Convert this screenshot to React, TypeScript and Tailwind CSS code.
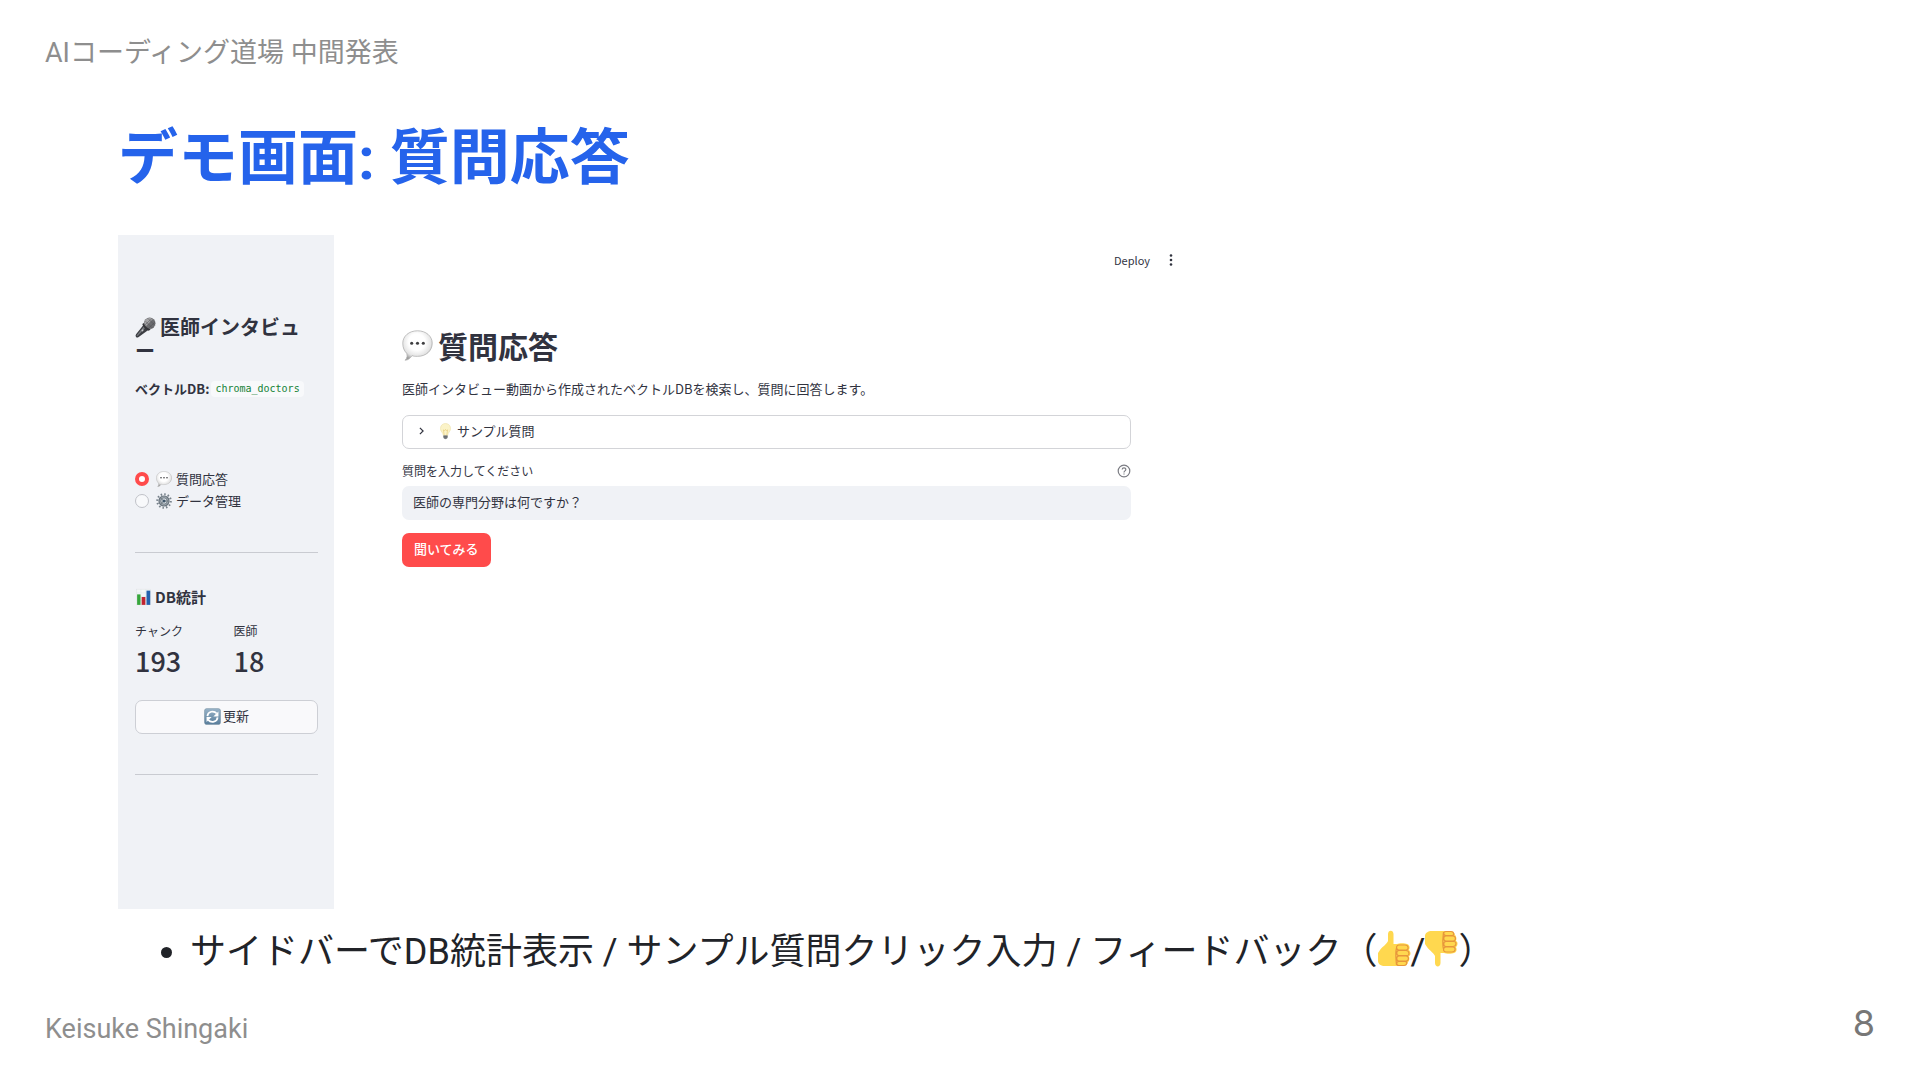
import { useState } from 'react';

type IconProps = { className?: string };

const pages = [
  { id: 'qa', label: '質問応答', Icon: SpeechBalloon },
  { id: 'data', label: 'データ管理', Icon: Gear },
];

const stats = [
  { label: 'チャンク', value: 193 },
  { label: '医師', value: 18 },
];

function Microphone({ className }: IconProps) {
  return (
    <svg viewBox="0 0 40 40" className={className} aria-hidden="true">
      <path d="M18 13 L28 23 L7 38 Q4 40 2 38 Q0 36 2 33 Z" fill="#3b3d42" />
      <path d="M19 15 L22 18 L5 36 L3 35 Z" fill="#74777c" />
      <circle cx="28" cy="12" r="11" fill="#6c6d70" />
      <path d="M20 5 Q27 -1 34 4 L21 17 Q15 12 20 5" fill="#a5a5a7" />
      <path d="M20 8 L33 21 M25 3 L38 16 M19 15 L32 3 M26 21 L38 10" stroke="#505154" strokeWidth="1" />
      <path d="M16 11 Q19 20 30 24 L26 26 Q17 23 14 14Z" fill="#333438" />
      <rect x="13" y="23" width="3" height="4" rx="1" transform="rotate(45 14 25)" fill="#c8c9cb" />
    </svg>
  );
}

function SpeechBalloon({ className }: IconProps) {
  return (
    <svg viewBox="0 0 40 40" className={className} aria-hidden="true">
      <defs>
        <radialGradient id="balloon" cx="48%" cy="38%" r="62%">
          <stop offset="45%" stopColor="#ffffff" />
          <stop offset="78%" stopColor="#e4e4e4" />
          <stop offset="100%" stopColor="#9c9c9c" />
        </radialGradient>
      </defs>
      <path
        d="M20 1 C31 1 39 8 39 17 C39 27 31 34 20 34 C17 34 15 34 13 33 C11 36 8 39 4 39 C7 36 7 33 6 30 C3 27 1 23 1 17 C1 8 9 1 20 1Z"
        fill="url(#balloon)"
        stroke="#b0b0b0"
        strokeWidth="1"
      />
      <g fill="#3e3e40">
        <circle cx="12.500" cy="17" r="2" />
        <circle cx="20" cy="17" r="2" />
        <circle cx="27.500" cy="17" r="2" />
      </g>
    </svg>
  );
}

function Gear({ className }: IconProps) {
  return (
    <svg viewBox="0 0 40 40" className={className} aria-hidden="true">
      <circle cx="20" cy="20" r="17" fill="none" stroke="#77828b" strokeWidth="5" strokeDasharray="3.8 5.1" />
      <circle cx="20" cy="20" r="12.500" fill="#a4adb5" stroke="#68737c" strokeWidth="3" />
      <circle cx="20" cy="20" r="8" fill="#dce2e7" stroke="#5c6871" strokeWidth="2" />
      <path d="M20 20 L12 13 M20 20 L12 27 M20 20 L30 20" stroke="#68737c" strokeWidth="2" />
      <circle cx="20" cy="20" r="4" fill="#3e5468" />
    </svg>
  );
}

function BarChart({ className }: IconProps) {
  return (
    <svg viewBox="0 0 40 44" className={className} aria-hidden="true">
      <rect x="1" y="1" width="38" height="42" fill="#f3f6f7" stroke="#d7dddf" />
      <path d="M1 11H39M1 21H39M1 31H39M13 1V43M26 1V43" stroke="#d5e1e6" />
      <rect x="3" y="15" width="9" height="28" fill="#36a63b" />
      <rect x="15" y="22" width="10" height="21" fill="#c02430" />
      <rect x="28" y="5" width="10" height="38" fill="#2361ae" />
    </svg>
  );
}

function Refresh({ className }: IconProps) {
  return (
    <svg viewBox="0 0 40 40" className={className} aria-hidden="true">
      <defs>
        <linearGradient id="refresh" x1="0" y1="0" x2="0" y2="1">
          <stop offset="0" stopColor="#98b3c8" />
          <stop offset="1" stopColor="#587d9b" />
        </linearGradient>
      </defs>
      <rect x="1" y="1" width="38" height="38" rx="6" fill="url(#refresh)" stroke="#6e8798" />
      <path d="M8 19 C9 8 23 5 30 13" fill="none" stroke="#fff" strokeWidth="4" />
      <path d="M34 8 V20 H22Z" fill="#fff" />
      <path d="M32 22 C31 33 17 36 10 28" fill="none" stroke="#fff" strokeWidth="4" />
      <path d="M6 33 V21 H18Z" fill="#fff" />
    </svg>
  );
}

function Bulb({ className }: IconProps) {
  return (
    <svg viewBox="0 0 26 40" className={className} aria-hidden="true">
      <path d="M13 1 C20 1 25 6 25 13 C25 20 19 22 18 30 H8 C7 22 1 20 1 13 C1 6 6 1 13 1Z" fill="#fbf3c8" stroke="#e6d993" />
      <path d="M10 29 L8 16 L11 18 L13 15 L15 18 L18 16 L16 29" fill="none" stroke="#e3c76c" strokeWidth="1.300" />
      <path d="M8 29 H18 V35 Q13 42 8 35Z" fill="#85898c" />
      <path d="M8 32H18M9 35H17" stroke="#4e5255" strokeWidth="1.200" />
    </svg>
  );
}

function ThumbsUp({ className }: IconProps) {
  return (
    <svg viewBox="0 0 33 37" className={className} aria-hidden="true">
      <path
        d="M2 20 C5 16 9 14 10 11 V4 C10 -.5 15.500 -.5 15.500 4 V14 H19 C21 13 27 13 29 14 C32 15 32 18 31 20 C33 22 33 25 31 26 C32 29 31 31 30 32 C29 36 26 36 23 36 H7 C3 36 0 34 0 31 V23 Z"
        fill="#ffd84f"
      />
      <path
        d="M18.500 18 C17 23 18 29 18.500 35 M29 20 H21 C18 20 17.500 15 21 15 H27 C31 15 31 20 28 20 M29 25.500 H21 C18 25.500 18 20.500 21 20.500 H28 C31.500 20.500 32 25.500 29 25.500 M28 31 H21 C18 31 18 26 21 26 H28 C31.500 26 31 31 28 31 M26 35.500 H21 C18 35.500 18 31.500 21 31.500 H27 C30 31.500 29 35.500 26 35.500"
        fill="none"
        stroke="#e7963c"
        strokeWidth="1.200"
      />
    </svg>
  );
}

function Kebab({ className }: IconProps) {
  return (
    <svg viewBox="0 0 14 14" className={className} fill="#31333f" aria-hidden="true">
      <circle cx="7" cy="2.500" r="1.300" />
      <circle cx="7" cy="7" r="1.300" />
      <circle cx="7" cy="11.500" r="1.300" />
    </svg>
  );
}

function Sidebar() {
  const [page, setPage] = useState('qa');

  return (
    <aside className="w-[216px] shrink-0 bg-[#f0f2f6] pt-20 pr-4 pb-[134px] pl-[17px]">
      <h2 className="text-[20px] leading-6 font-semibold">
        <Microphone className="mr-1 inline-block size-[21px] align-[-3px]" />
        医師インタビュー
      </h2>
      <p className="mt-4 flex items-center text-[13px] leading-5 font-semibold">
        ベクトルDB:
        <code className="ml-[2px] rounded-sm bg-[#f8f9fb] px-1 font-['DejaVu_Sans_Mono',monospace] text-[10px] leading-4 font-normal text-[#158237]">
          chroma_doctors
        </code>
      </p>

      <fieldset className="mt-[69px]">
        {pages.map(({ id, label, Icon }) => (
          <label key={id} className="flex items-center text-[13px] leading-[22px]">
            <input
              type="radio"
              name="page"
              checked={page === id}
              onChange={() => setPage(id)}
              className="size-[14px] appearance-none rounded-full border border-[#c0c2c8] bg-[#f8f9fb] checked:border-4 checked:border-[#ff4b4b] checked:bg-white"
            />
            <Icon className="mr-1 ml-[7px] size-4" />
            {label}
          </label>
        ))}
      </fieldset>

      <hr className="mt-10 border-[#c9cbd1]" />

      <h3 className="mt-8 flex items-center text-[15px] leading-6 font-semibold">
        <BarChart className="mr-1 ml-px h-[18px] w-[15px]" />
        DB統計
      </h3>
      <dl className="mt-[13px] grid grid-cols-2 gap-x-[14px]">
        {stats.map((s) => (
          <div key={s.label}>
            <dt className="text-[12px] leading-[18px]">{s.label}</dt>
            <dd className="mt-px text-[27px] leading-10 font-medium">{s.value}</dd>
          </div>
        ))}
      </dl>
      <button
        type="button"
        className="mt-[19px] flex h-[34px] w-full items-center justify-center gap-[2px] rounded-[7px] border border-[#cdcfd5] bg-[#f9f9fb] pb-[2px] text-[13px]"
      >
        <Refresh className="size-[17px]" />
        更新
      </button>

      <hr className="mt-10 border-[#c9cbd1]" />
    </aside>
  );
}

function QuestionPage() {
  const [question, setQuestion] = useState('医師の専門分野は何ですか？');

  return (
    <main className="min-w-0 flex-1">
      <div className="flex h-[50px] items-center justify-end gap-[14px] pr-5 text-[11px]">
        <button type="button">Deploy</button>
        <button type="button" aria-label="Menu">
          <Kebab className="size-[14px]" />
        </button>
      </div>

      <div className="pr-[67px] pl-[68px]">
        <h2 className="mt-10 flex items-center gap-[5px] text-[30px] leading-10 font-semibold">
          <SpeechBalloon className="size-[31px]" />
          質問応答
        </h2>
        <p className="mt-[14px] text-[13px] leading-5">
          医師インタビュー動画から作成されたベクトルDBを検索し、質問に回答します。
        </p>

        <button
          type="button"
          aria-expanded="false"
          className="mt-4 flex h-[34px] w-full items-center rounded-[7px] border border-[#d3d4d8] px-4 pb-[2px] text-[13px]"
        >
          <svg viewBox="0 0 6 10" className="h-2 w-[5px]" fill="none" stroke="#31333f" strokeWidth="1.500" aria-hidden="true">
            <path d="M1 1 L5 5 L1 9" />
          </svg>
          <Bulb className="mr-[6px] ml-4 h-[17px] w-[11px]" />
          サンプル質問
        </button>

        <div className="mt-[13px] flex items-center justify-between text-[12px] leading-[18px]">
          <label htmlFor="question">質問を入力してください</label>
          <button type="button" aria-label="Help">
            <svg viewBox="0 0 14 14" className="size-[14px]" fill="none" stroke="#7b7c83" strokeWidth="1.200" aria-hidden="true">
              <circle cx="7" cy="7" r="5.800" />
              <path d="M5.200 5.600 C5.200 3.200 8.800 3.200 8.800 5.500 C8.800 6.900 7 6.900 7 8.400 M7 9.500 V10.600" />
            </svg>
          </button>
        </div>
        <input
          id="question"
          type="text"
          value={question}
          onChange={(e) => setQuestion(e.target.value)}
          className="mt-[6px] block h-[34px] w-full rounded-[7px] bg-[#f0f2f6] px-[11px] pb-1 text-[13px]"
        />
        <button type="button" className="mt-[13px] h-[34px] rounded-[7px] bg-[#ff4b4b] px-3 pb-[2px] text-[13px] font-medium text-white">
          聞いてみる
        </button>
      </div>
    </main>
  );
}

export default function App() {
  return (
    <div className="flex min-h-screen flex-col bg-white font-['Roboto','Noto_Sans_CJK_JP',sans-serif] text-[#212328]">
      <header className="px-[45px] pt-[35px] text-[27px] leading-9 text-[#8e8e8e]">
        AIコーディング道場 中間発表
      </header>

      <section className="px-[118px]">
        <h1 className="mt-[52px] text-[60px] leading-[72px] font-bold text-[#2563eb]">デモ画面: 質問応答</h1>

        <div className="mt-10 flex w-full max-w-[1080px] font-['Noto_Sans_CJK_JP',sans-serif] text-[#31333f]">
          <Sidebar />
          <QuestionPage />
        </div>

        <ul className="mt-4 list-disc pl-[72px] text-[36px] leading-[54px]">
          <li>
            サイドバーでDB統計表示 / サンプル質問クリック入力 / フィードバック（
            <ThumbsUp className="inline-block h-[37px] w-[33px] align-[-3px]" />
            /
            <ThumbsUp className="inline-block h-[37px] w-[33px] -scale-y-100 align-[-3px]" />）
          </li>
        </ul>
      </section>

      <footer className="mt-auto flex items-end justify-between px-[45px] pb-[33px] text-[#8e8e8e]">
        <p className="text-[27px] leading-9">Keisuke Shingaki</p>
        <p className="font-['Inter',sans-serif] text-[36px] leading-[48px] text-[#777777]">8</p>
      </footer>
    </div>
  );
}
